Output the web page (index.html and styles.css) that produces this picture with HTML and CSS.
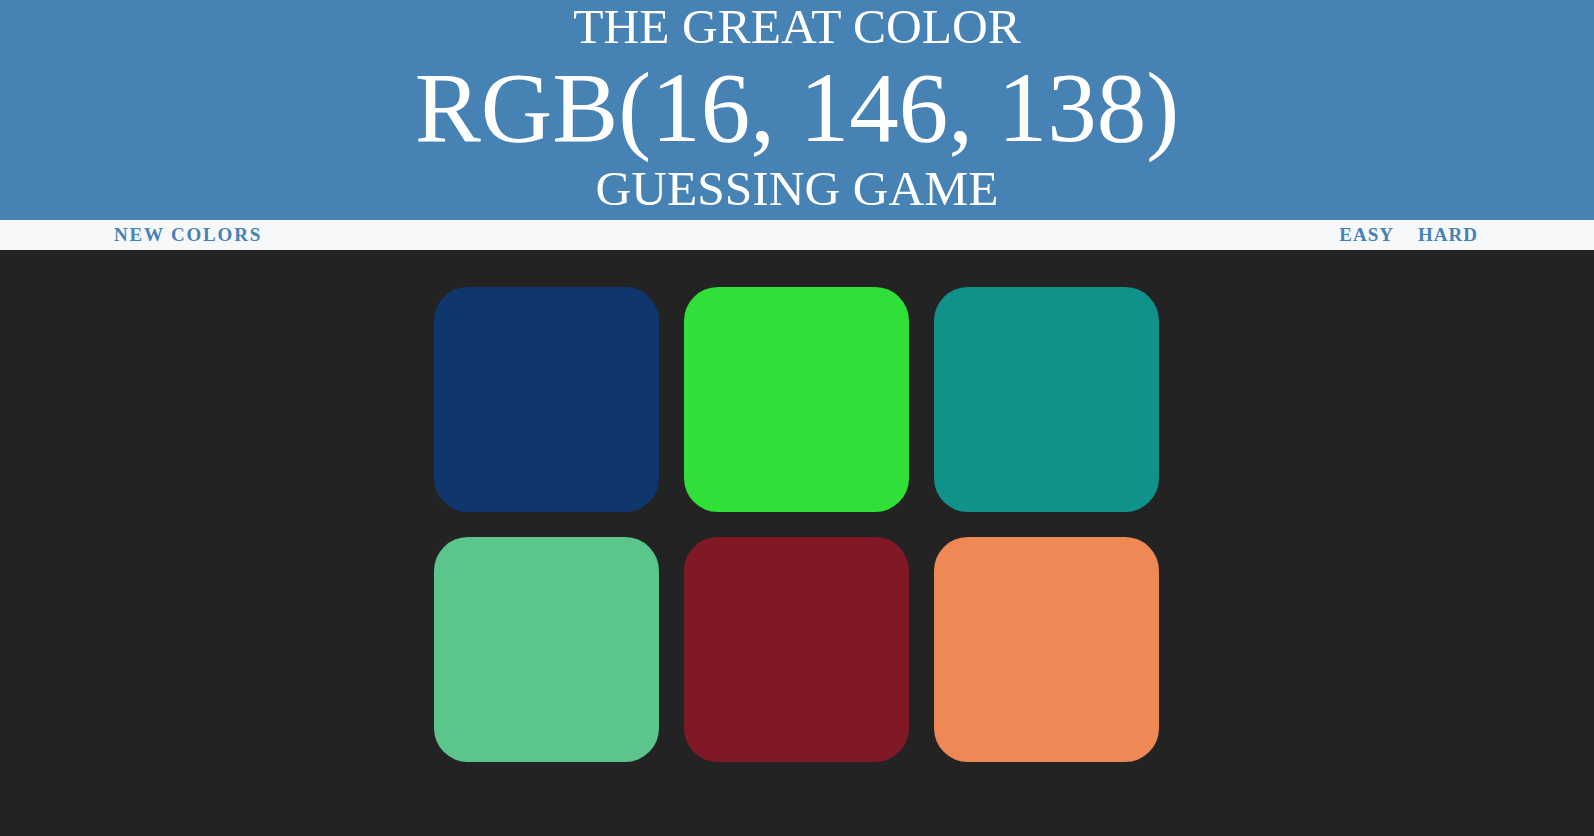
FILE: index.html
```html
<!DOCTYPE html>
<html lang="en">
<head>
<meta charset="utf-8">
<title>The Great Color Guessing Game</title>
<link rel="stylesheet" href="styles.css">
</head>
<body>
<h1 class="title">
  <span class="title-line">The Great Color</span>
  <span class="title-rgb">RGB(16, 146, 138)</span>
  <span class="title-line">Guessing Game</span>
</h1>
<nav class="stripe">
  <button class="btn btn-new">New Colors</button>
  <div class="modes">
    <button class="btn">Easy</button>
    <button class="btn">Hard</button>
  </div>
</nav>
<main class="board">
  <div class="square sq-navy"></div>
  <div class="square sq-green"></div>
  <div class="square sq-teal"></div>
  <div class="square sq-mint"></div>
  <div class="square sq-maroon"></div>
  <div class="square sq-orange"></div>
</main>
</body>
</html>
```
FILE: styles.css
```css
html, body {
  margin: 0;
  padding: 0;
}
body {
  background: #232323;
  min-height: 836px;
  font-family: "Liberation Serif", "Times New Roman", serif;
}
.title {
  margin: 0;
  padding: 0 0 3px 0;
  background: #4682b4;
  color: #ffffff;
  text-align: center;
  text-transform: uppercase;
  font-weight: normal;
  font-size: 49.5px;
  line-height: 1.1;
}
.title-line {
  display: block;
}
.title-rgb {
  display: block;
  font-size: 200%;
  line-height: 1.09;
}
.stripe {
  height: 30px;
  background: #f7f8fa;
  display: flex;
  align-items: center;
  justify-content: space-between;
  padding: 0 116px 0 114px;
}
.modes {
  display: flex;
  gap: 24px;
}
.btn {
  border: none;
  background: none;
  padding: 0;
  margin: 0;
  font-family: "Liberation Serif", "Times New Roman", serif;
  font-weight: 700;
  font-size: 19px;
  letter-spacing: 1px;
  text-transform: uppercase;
  color: #4682b4;
  line-height: 30px;
  height: 30px;
  cursor: pointer;
}
.btn-new {
  letter-spacing: 1.8px;
}
.board {
  display: grid;
  grid-template-columns: repeat(3, 225px);
  grid-auto-rows: 225px;
  gap: 25px;
  justify-content: center;
  padding: 37px 1px 0 0;
}
.square {
  border-radius: 15%;
}
.sq-navy { background: #10366e; }
.sq-green { background: #30df37; }
.sq-teal { background: #10928a; }
.sq-mint { background: #5bc58c; }
.sq-maroon { background: #811826; }
.sq-orange { background: #ee8955; }
```
